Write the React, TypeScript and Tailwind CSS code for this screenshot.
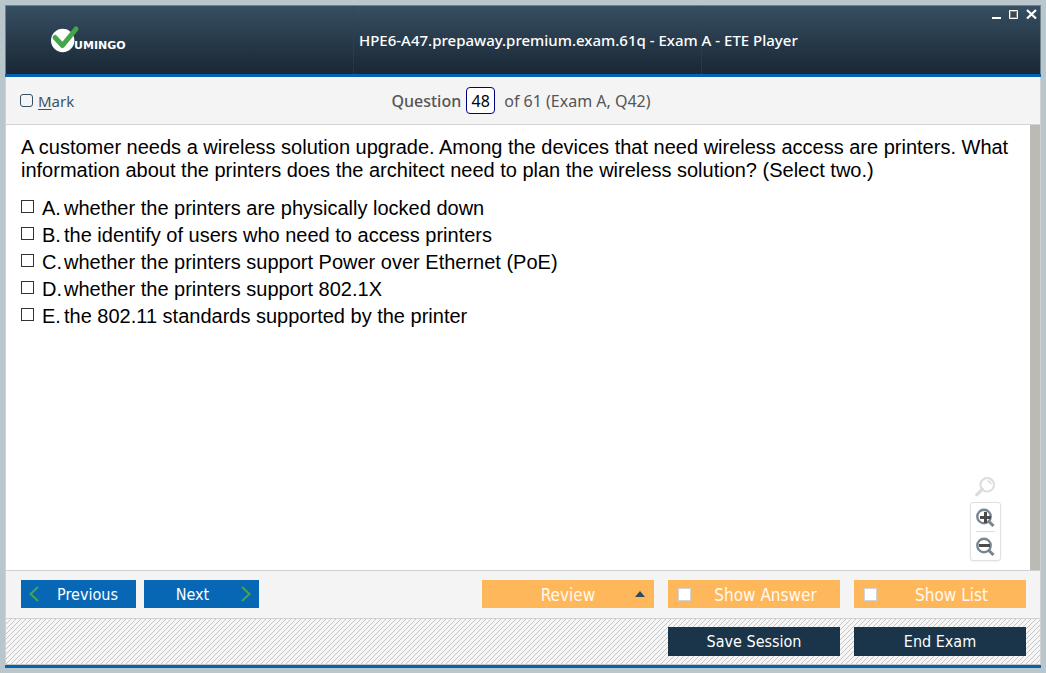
import { useState } from "react";

const options = [
  { id: "A", text: "whether the printers are physically locked down" },
  { id: "B", text: "the identify of users who need to access printers" },
  { id: "C", text: "whether the printers support Power over Ethernet (PoE)" },
  { id: "D", text: "whether the printers support 802.1X" },
  { id: "E", text: "the 802.11 standards supported by the printer" },
];

function Logo() {
  return (
    <svg width="84" height="30" viewBox="0 0 84 30" role="img" aria-label="Vumingo">
      <circle cx="11.7" cy="15.5" r="11.7" fill="#fff" />
      <path d="M4 12.5 L11.5 20.5 L25 4" fill="none" stroke="#45a649" strokeWidth="5" strokeLinecap="round" strokeLinejoin="round" />
      <text x="23" y="24" fill="#fff" fontFamily="'DejaVu Sans', sans-serif" fontWeight="700" fontSize="11">
        UMINGO
      </text>
    </svg>
  );
}

function Header() {
  return (
    <header className="grid h-[69px] grid-cols-[minmax(0,347fr)_minmax(0,349fr)_minmax(0,338fr)] border border-b-0 border-[#6f838b] bg-linear-to-b from-[#364f62] to-[#1a2735]">
      <div className="flex items-center pl-[45px]">
        <Logo />
      </div>
      <div className="flex items-center border-x border-dotted border-[#353a86] pl-[5px]">
        <h1 className="font-['Noto_Sans',sans-serif] text-[15px] font-medium whitespace-nowrap text-white">
          HPE6-A47.prepaway.premium.exam.61q - Exam A - ETE Player
        </h1>
      </div>
      <div className="flex items-start justify-end gap-2 pt-[2px] pr-[3px]">
        <button type="button" aria-label="Minimize">
          <svg width="9" height="11" viewBox="0 0 9 11"><path d="M0 9h9v2H0z" fill="#fff" /></svg>
        </button>
        <button type="button" aria-label="Maximize">
          <svg width="9" height="11" viewBox="0 0 9 11"><path d="M.5 2.5h8v8h-8z" fill="none" stroke="#fff" /><path d="M1.5 3.5h6v6h-6z" fill="none" stroke="#8b8580" /></svg>
        </button>
        <button type="button" aria-label="Close">
          <svg width="11" height="11" viewBox="0 0 11 11"><path d="M1 2 L10 10.5 M10 2 L1 10.5" stroke="#fff" strokeWidth="2.2" /></svg>
        </button>
      </div>
    </header>
  );
}

function ZoomTools() {
  return (
    <div className="absolute right-[29px] bottom-[9px] flex w-[31px] flex-col items-center gap-1">
      <button type="button" aria-label="Reset zoom">
        <svg width="22" height="22" viewBox="0 0 22 22" fill="none" stroke="#dcdcdc">
          <circle cx="12.2" cy="8.8" r="6.8" strokeWidth="2" />
          <path d="M7.3 13.4 L1.9 18.6" strokeWidth="3.4" strokeLinecap="round" />
          <path d="M12.5 4.8 Q15.7 5.4 15.9 8.2" strokeWidth="1.6" />
        </svg>
      </button>
      <div className="flex w-[31px] flex-col items-center rounded-[3px] border border-[#e0e0e0] bg-white px-[5px] shadow-xs">
        <button type="button" aria-label="Zoom in" className="flex h-[28px] items-center">
          <svg width="20" height="20" viewBox="0 0 20 20" fill="none">
            <circle cx="8" cy="9.5" r="6.7" stroke="#768592" strokeWidth="2.4" />
            <path d="M12.7 14.2 L17.5 19" stroke="#768592" strokeWidth="3" />
            <path d="M9.5 5v11M4 10.5h11" stroke="#4b4b4b" strokeWidth="3" />
          </svg>
        </button>
        <div className="h-px w-[19px] bg-[#dcdcdc]" />
        <button type="button" aria-label="Zoom out" className="flex h-[28px] items-center">
          <svg width="20" height="20" viewBox="0 0 20 20" fill="none">
            <circle cx="8" cy="9.5" r="6.7" stroke="#768592" strokeWidth="2.4" />
            <path d="M12.7 14.2 L17.5 19" stroke="#768592" strokeWidth="3" />
            <path d="M3 9.5h11" stroke="#4b4b4b" strokeWidth="3" />
          </svg>
        </button>
      </div>
    </div>
  );
}

function ToggleButton({ label }: { label: string }) {
  return (
    <label className="flex h-[28px] w-[172px] items-center bg-[#ffb75b] pl-[10px] text-[#fffaf0]">
      <input type="checkbox" className="size-[13px] shrink-0 appearance-none border border-[#d3d3d3] bg-white checked:bg-[#364f62]" />
      <span className="flex-1 pt-[3px] text-center">{label}</span>
    </label>
  );
}

export default function App() {
  const [question, setQuestion] = useState("48");

  return (
    <div className="flex min-h-screen flex-col bg-[#b9c6cc] p-[5px]">
      <Header />
      <div className="h-[3px] bg-[#0561b2]" />

      <main className="flex grow flex-col border-x border-[#cfd2d3] bg-white">
        <div className="grid h-[48px] grid-cols-[1fr_auto_1fr] items-center border-b border-[#d3d3d3] bg-[#f4f4f4] pr-[18px] pl-[14px] font-['Noto_Sans',sans-serif] text-[16px] text-[#555]">
          <label className="flex items-center gap-[5px] pt-[2px] text-[15px] text-[#3f5264]">
            <input type="checkbox" className="mb-[2px] size-[13px] appearance-none rounded-[3px] border border-[#364f62] bg-[#f4f4f4] checked:bg-[#364f62]" />
            <span>
              <span className="underline underline-offset-2">M</span>ark
            </span>
          </label>
          <div className="flex items-center gap-[5px]">
            <label htmlFor="question-number" className="font-medium">
              Question
            </label>
            <input
              id="question-number"
              value={question}
              onChange={(e) => setQuestion(e.target.value)}
              className="h-[27px] w-[29px] rounded-[4px] border border-[#000080] bg-white text-center text-black"
            />
            <span className="pl-1">of 61 (Exam A, Q42)</span>
          </div>
        </div>

        <div className="flex grow">
          <section className="relative flex grow flex-col gap-[13px] px-[15px] pt-[11px] font-['Liberation_Sans',sans-serif] text-[20px] leading-[23px] text-black">
            <p>
              A customer needs a wireless solution upgrade. Among the devices that need wireless access are printers. What
              information about the printers does the architect need to plan the wireless solution? (Select two.)
            </p>
            <ul>
              {options.map((option) => (
                <li key={option.id}>
                  <label className="flex h-[27px] items-center">
                    <input type="checkbox" className="mr-2 mb-[4px] size-[13px] shrink-0 appearance-none border border-[#333] bg-white checked:bg-[#333]" />
                    <span className="w-[22px] shrink-0">{option.id}.</span>
                    <span>{option.text}</span>
                  </label>
                </li>
              ))}
            </ul>
            <ZoomTools />
          </section>
          <div className="w-[10px] shrink-0 bg-[#bbbab5]" />
        </div>

        <footer className="font-['DejaVu_Sans_Condensed','DejaVu_Sans',sans-serif] text-[16px]">
          <div className="flex h-[49px] items-start justify-between border-y border-[#d0d0d0] bg-[#f4f4f4] pt-[9px] pr-[14px] pl-[15px]">
            <div className="flex gap-2 text-white">
              <button type="button" className="flex h-[28px] w-[115px] items-center bg-[#0867b5] pl-2">
                <svg width="10" height="16" viewBox="0 0 10 16" fill="none" stroke="#45a649" strokeWidth="2"><path d="M9 1 L1.5 8 L9 15" /></svg>
                <span className="flex-1 pt-[2px] text-center">Previous</span>
              </button>
              <button type="button" className="flex h-[28px] w-[115px] items-center bg-[#0867b5] pr-2">
                <span className="flex-1 pt-[2px] text-center">Next</span>
                <svg width="10" height="16" viewBox="0 0 10 16" fill="none" stroke="#45a649" strokeWidth="2"><path d="M1 1 L8.5 8 L1 15" /></svg>
              </button>
            </div>
            <div className="flex gap-[14px] text-[17px]">
              <button type="button" className="flex h-[28px] w-[172px] items-center bg-[#ffb75b] pr-[9px] pl-[19px] text-[#fffaf0]">
                <span className="flex-1 pt-[3px] text-center">Review</span>
                <svg width="10" height="6" viewBox="0 0 10 6"><path d="M5 0 L10 6 H0z" fill="#30495c" /></svg>
              </button>
              <ToggleButton label="Show Answer" />
              <ToggleButton label="Show List" />
            </div>
          </div>
          <div className="flex justify-end gap-[14px] border-b border-[#c4c4c4] bg-[#f6f6f6] bg-[linear-gradient(135deg,transparent_44%,#c4c4c4_44%,#c4c4c4_56%,transparent_56%)] bg-size-[5px_5px] py-2 pr-[14px] text-white">
            <button type="button" className="h-[29px] w-[172px] bg-[#1a3449]">Save Session</button>
            <button type="button" className="h-[29px] w-[172px] bg-[#1a3449]">End Exam</button>
          </div>
        </footer>
      </main>
      <div className="h-[3px] bg-[#0561b2]" />
    </div>
  );
}
